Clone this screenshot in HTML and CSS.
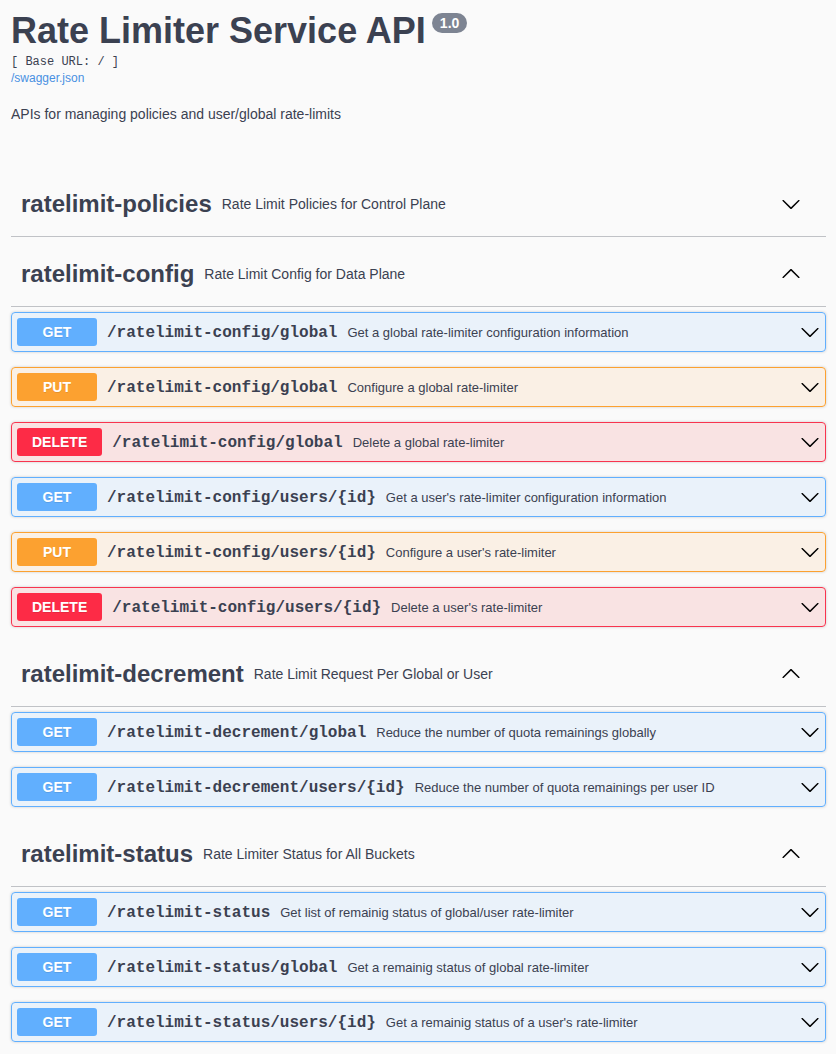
FILE: index.html
```html
<!DOCTYPE html>
<html lang="en">
<head>
<meta charset="utf-8">
<title>Rate Limiter Service API</title>
<link rel="stylesheet" href="styles.css">
</head>
<body>
<div class="wrapper">
  <div class="info">
    <h2 class="title">Rate Limiter Service API<span class="version">1.0</span></h2>
    <pre class="base-url">[ Base URL: / ]</pre>
    <a class="spec-link" href="#">/swagger.json</a>
    <p class="description">APIs for managing policies and user/global rate-limits</p>
  </div>

  <section class="tag-section">
    <h3 class="tag">
      <span class="tag-name">ratelimit-policies</span>
      <small class="tag-desc">Rate Limit Policies for Control Plane</small>
      <svg class="arrow" width="20" height="20" viewBox="0 0 20 20"><path d="M17.418 6.109c.272-.268.709-.268.979 0s.271.701 0 .969l-7.908 7.83c-.27.268-.707.268-.979 0l-7.908-7.83c-.27-.268-.27-.701 0-.969.271-.268.709-.268.979 0L10 13.25l7.418-7.141z"/></svg>
    </h3>
  </section>

  <section class="tag-section">
    <h3 class="tag">
      <span class="tag-name">ratelimit-config</span>
      <small class="tag-desc">Rate Limit Config for Data Plane</small>
      <svg class="arrow up" width="20" height="20" viewBox="0 0 20 20"><path d="M17.418 6.109c.272-.268.709-.268.979 0s.271.701 0 .969l-7.908 7.83c-.27.268-.707.268-.979 0l-7.908-7.83c-.27-.268-.27-.701 0-.969.271-.268.709-.268.979 0L10 13.25l7.418-7.141z"/></svg>
    </h3>
    <div class="opblock get">
      <span class="method">GET</span>
      <span class="path">/ratelimit-config/global</span>
      <span class="summary">Get a global rate-limiter configuration information</span>
      <svg class="arrow" width="20" height="20" viewBox="0 0 20 20"><path d="M17.418 6.109c.272-.268.709-.268.979 0s.271.701 0 .969l-7.908 7.83c-.27.268-.707.268-.979 0l-7.908-7.83c-.27-.268-.27-.701 0-.969.271-.268.709-.268.979 0L10 13.25l7.418-7.141z"/></svg>
    </div>
    <div class="opblock put">
      <span class="method">PUT</span>
      <span class="path">/ratelimit-config/global</span>
      <span class="summary">Configure a global rate-limiter</span>
      <svg class="arrow" width="20" height="20" viewBox="0 0 20 20"><path d="M17.418 6.109c.272-.268.709-.268.979 0s.271.701 0 .969l-7.908 7.83c-.27.268-.707.268-.979 0l-7.908-7.83c-.27-.268-.27-.701 0-.969.271-.268.709-.268.979 0L10 13.25l7.418-7.141z"/></svg>
    </div>
    <div class="opblock delete">
      <span class="method">DELETE</span>
      <span class="path">/ratelimit-config/global</span>
      <span class="summary">Delete a global rate-limiter</span>
      <svg class="arrow" width="20" height="20" viewBox="0 0 20 20"><path d="M17.418 6.109c.272-.268.709-.268.979 0s.271.701 0 .969l-7.908 7.83c-.27.268-.707.268-.979 0l-7.908-7.83c-.27-.268-.27-.701 0-.969.271-.268.709-.268.979 0L10 13.25l7.418-7.141z"/></svg>
    </div>
    <div class="opblock get">
      <span class="method">GET</span>
      <span class="path">/ratelimit-config/users/{id}</span>
      <span class="summary">Get a user's rate-limiter configuration information</span>
      <svg class="arrow" width="20" height="20" viewBox="0 0 20 20"><path d="M17.418 6.109c.272-.268.709-.268.979 0s.271.701 0 .969l-7.908 7.83c-.27.268-.707.268-.979 0l-7.908-7.83c-.27-.268-.27-.701 0-.969.271-.268.709-.268.979 0L10 13.25l7.418-7.141z"/></svg>
    </div>
    <div class="opblock put">
      <span class="method">PUT</span>
      <span class="path">/ratelimit-config/users/{id}</span>
      <span class="summary">Configure a user's rate-limiter</span>
      <svg class="arrow" width="20" height="20" viewBox="0 0 20 20"><path d="M17.418 6.109c.272-.268.709-.268.979 0s.271.701 0 .969l-7.908 7.83c-.27.268-.707.268-.979 0l-7.908-7.83c-.27-.268-.27-.701 0-.969.271-.268.709-.268.979 0L10 13.25l7.418-7.141z"/></svg>
    </div>
    <div class="opblock delete">
      <span class="method">DELETE</span>
      <span class="path">/ratelimit-config/users/{id}</span>
      <span class="summary">Delete a user's rate-limiter</span>
      <svg class="arrow" width="20" height="20" viewBox="0 0 20 20"><path d="M17.418 6.109c.272-.268.709-.268.979 0s.271.701 0 .969l-7.908 7.83c-.27.268-.707.268-.979 0l-7.908-7.83c-.27-.268-.27-.701 0-.969.271-.268.709-.268.979 0L10 13.25l7.418-7.141z"/></svg>
    </div>
  </section>

  <section class="tag-section">
    <h3 class="tag">
      <span class="tag-name">ratelimit-decrement</span>
      <small class="tag-desc">Rate Limit Request Per Global or User</small>
      <svg class="arrow up" width="20" height="20" viewBox="0 0 20 20"><path d="M17.418 6.109c.272-.268.709-.268.979 0s.271.701 0 .969l-7.908 7.83c-.27.268-.707.268-.979 0l-7.908-7.83c-.27-.268-.27-.701 0-.969.271-.268.709-.268.979 0L10 13.25l7.418-7.141z"/></svg>
    </h3>
    <div class="opblock get">
      <span class="method">GET</span>
      <span class="path">/ratelimit-decrement/global</span>
      <span class="summary">Reduce the number of quota remainings globally</span>
      <svg class="arrow" width="20" height="20" viewBox="0 0 20 20"><path d="M17.418 6.109c.272-.268.709-.268.979 0s.271.701 0 .969l-7.908 7.83c-.27.268-.707.268-.979 0l-7.908-7.83c-.27-.268-.27-.701 0-.969.271-.268.709-.268.979 0L10 13.25l7.418-7.141z"/></svg>
    </div>
    <div class="opblock get">
      <span class="method">GET</span>
      <span class="path">/ratelimit-decrement/users/{id}</span>
      <span class="summary">Reduce the number of quota remainings per user ID</span>
      <svg class="arrow" width="20" height="20" viewBox="0 0 20 20"><path d="M17.418 6.109c.272-.268.709-.268.979 0s.271.701 0 .969l-7.908 7.83c-.27.268-.707.268-.979 0l-7.908-7.83c-.27-.268-.27-.701 0-.969.271-.268.709-.268.979 0L10 13.25l7.418-7.141z"/></svg>
    </div>
  </section>

  <section class="tag-section">
    <h3 class="tag">
      <span class="tag-name">ratelimit-status</span>
      <small class="tag-desc">Rate Limiter Status for All Buckets</small>
      <svg class="arrow up" width="20" height="20" viewBox="0 0 20 20"><path d="M17.418 6.109c.272-.268.709-.268.979 0s.271.701 0 .969l-7.908 7.83c-.27.268-.707.268-.979 0l-7.908-7.83c-.27-.268-.27-.701 0-.969.271-.268.709-.268.979 0L10 13.25l7.418-7.141z"/></svg>
    </h3>
    <div class="opblock get">
      <span class="method">GET</span>
      <span class="path">/ratelimit-status</span>
      <span class="summary">Get list of remainig status of global/user rate-limiter</span>
      <svg class="arrow" width="20" height="20" viewBox="0 0 20 20"><path d="M17.418 6.109c.272-.268.709-.268.979 0s.271.701 0 .969l-7.908 7.83c-.27.268-.707.268-.979 0l-7.908-7.83c-.27-.268-.27-.701 0-.969.271-.268.709-.268.979 0L10 13.25l7.418-7.141z"/></svg>
    </div>
    <div class="opblock get">
      <span class="method">GET</span>
      <span class="path">/ratelimit-status/global</span>
      <span class="summary">Get a remainig status of global rate-limiter</span>
      <svg class="arrow" width="20" height="20" viewBox="0 0 20 20"><path d="M17.418 6.109c.272-.268.709-.268.979 0s.271.701 0 .969l-7.908 7.83c-.27.268-.707.268-.979 0l-7.908-7.83c-.27-.268-.27-.701 0-.969.271-.268.709-.268.979 0L10 13.25l7.418-7.141z"/></svg>
    </div>
    <div class="opblock get">
      <span class="method">GET</span>
      <span class="path">/ratelimit-status/users/{id}</span>
      <span class="summary">Get a remainig status of a user's rate-limiter</span>
      <svg class="arrow" width="20" height="20" viewBox="0 0 20 20"><path d="M17.418 6.109c.272-.268.709-.268.979 0s.271.701 0 .969l-7.908 7.83c-.27.268-.707.268-.979 0l-7.908-7.83c-.27-.268-.27-.701 0-.969.271-.268.709-.268.979 0L10 13.25l7.418-7.141z"/></svg>
    </div>
  </section>
</div>
</body>
</html>
```

FILE: styles.css
```css
html, body {
  margin: 0;
  padding: 0;
  background: #fafafa;
}

body {
  font-family: "Liberation Sans", Arial, sans-serif;
  color: #3b4151;
  overflow: hidden;
}

.wrapper {
  padding: 10px 10px 0 11px;
}

.info {
  margin-bottom: 50px;
}

.title {
  margin: 0;
  font-size: 36px;
  line-height: 41px;
  font-weight: 700;
  color: #3b4151;
}

.version {
  display: inline-block;
  vertical-align: top;
  margin: 3px 0 0 6px;
  padding: 2px 8px;
  border-radius: 57px;
  background: #7d8492;
  color: #fff;
  font-size: 14px;
  line-height: 16px;
  font-weight: 700;
}

.base-url {
  margin: 4px 0 0;
  font-family: "Liberation Mono", "Courier New", monospace;
  font-size: 12px;
  line-height: 14px;
  color: #3b4151;
}

.spec-link {
  display: block;
  margin-top: 2px;
  font-size: 12px;
  line-height: 14px;
  color: #4990e2;
  text-decoration: none;
}

.description {
  margin: 21px 0 0;
  font-size: 14px;
  line-height: 16px;
}

.tag {
  display: flex;
  align-items: center;
  height: 64px;
  margin: 0 0 5px;
  padding: 0 25px 0 10px;
  border-bottom: 1px solid rgba(59, 65, 81, 0.3);
  font-size: 24px;
  font-weight: 700;
  color: #3b4151;
}

.tag-name {
  font-size: 24px;
  line-height: 28px;
}

.tag-desc {
  flex: 1;
  padding: 0 10px;
  font-size: 14px;
  font-weight: 400;
  line-height: 16px;
}

.arrow {
  flex: none;
  fill: #000;
}

.arrow.up {
  transform: rotate(180deg);
}

.opblock {
  display: flex;
  align-items: center;
  box-sizing: border-box;
  height: 40px;
  margin: 0 0 15px;
  padding: 0 5px;
  border: 1px solid;
  border-radius: 4px;
  box-shadow: 0 0 3px rgba(0, 0, 0, 0.19);
}

.method {
  flex: none;
  box-sizing: border-box;
  min-width: 80px;
  height: 28px;
  padding: 6px 15px;
  border-radius: 3px;
  color: #fff;
  font-size: 14px;
  line-height: 16px;
  font-weight: 700;
  text-align: center;
  text-shadow: 0 1px 0 rgba(0, 0, 0, 0.1);
}

.path {
  flex: none;
  padding: 3px 10px 0;
  font-family: "Liberation Mono", "Courier New", monospace;
  font-size: 16px;
  line-height: 19px;
  font-weight: 700;
  color: #3b4151;
}

.summary {
  flex: 1;
  padding: 0 10px 0 0;
  font-size: 13px;
  color: #3b4151;
}

.get {
  background: rgba(97, 175, 254, 0.1);
  border-color: #61affe;
}
.get .method { background: #61affe; }

.put {
  background: rgba(252, 161, 48, 0.1);
  border-color: #fca130;
}
.put .method { background: #fca130; }

.delete {
  background: rgba(249, 62, 62, 0.12);
  border-color: #f8344f;
}
.delete .method { background: #fd2b46; }
```
